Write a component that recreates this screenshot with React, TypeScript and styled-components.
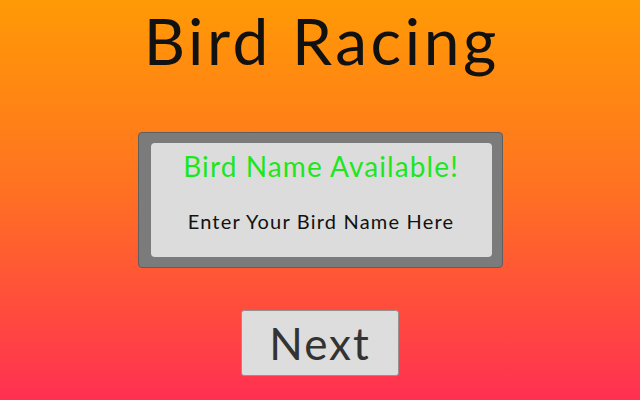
import * as React from "react";
import styled, { createGlobalStyle } from "styled-components";

const GlobalStyle = createGlobalStyle`
  html, body {
    margin: 0;
    padding: 0;
    height: 100%;
  }
  #root {
    height: 100%;
  }
`;

const Screen = styled.div`
  height: 400px;
  width: 640px;
  display: flex;
  flex-direction: column;
  align-items: center;
  background: linear-gradient(180deg, #ff9a05 0%, #ff7420 45%, #ff3052 100%);
  font-family: Lato, "Open Sans", sans-serif;
  overflow: hidden;
`;

const Title = styled.h1`
  margin: 6px 0 0;
  padding-left: 3.6px;
  font-size: 64px;
  font-weight: 400;
  line-height: 70px;
  letter-spacing: 3.6px;
  color: #111;
`;

const NameFrame = styled.div`
  margin-top: 56px;
  width: 365px;
  box-sizing: border-box;
  padding: 10px 10px 10px 12px;
  background: #7b7b7b;
  border: 1px solid #5e5e5e;
  border-radius: 4px;
`;

const NamePanel = styled.div`
  height: 114px;
  display: flex;
  flex-direction: column;
  align-items: center;
  background: #dcdcdc;
  border-radius: 4px;
`;

const Status = styled.div<{ $ok: boolean }>`
  margin-top: 5px;
  font-size: 28px;
  line-height: 36px;
  letter-spacing: 1.1px;
  color: ${(p) => (p.$ok ? "#1ee61e" : "#e61e1e")};
`;

const NameInput = styled.input`
  margin-top: 24px;
  width: 320px;
  border: none;
  background: transparent;
  outline: none;
  text-align: center;
  font-family: inherit;
  font-size: 20px;
  letter-spacing: 1.2px;
  color: #111;

  &::placeholder {
    color: #111;
  }
`;

const NextButton = styled.button`
  margin-top: 42px;
  width: 158px;
  height: 66px;
  background: #dddddd;
  border: 1px solid #9a8f8f;
  border-radius: 3px;
  font-family: inherit;
  font-size: 44px;
  letter-spacing: 2px;
  color: #333;
  cursor: pointer;
`;

export default function App() {
  const [name, setName] = React.useState("");

  return (
    <>
      <GlobalStyle />
      <Screen>
        <Title>Bird Racing</Title>
        <NameFrame>
          <NamePanel>
            <Status $ok>Bird Name Available!</Status>
            <NameInput
              value={name}
              placeholder="Enter Your Bird Name Here"
              onChange={(e) => setName(e.target.value)}
            />
          </NamePanel>
        </NameFrame>
        <NextButton>Next</NextButton>
      </Screen>
    </>
  );
}
